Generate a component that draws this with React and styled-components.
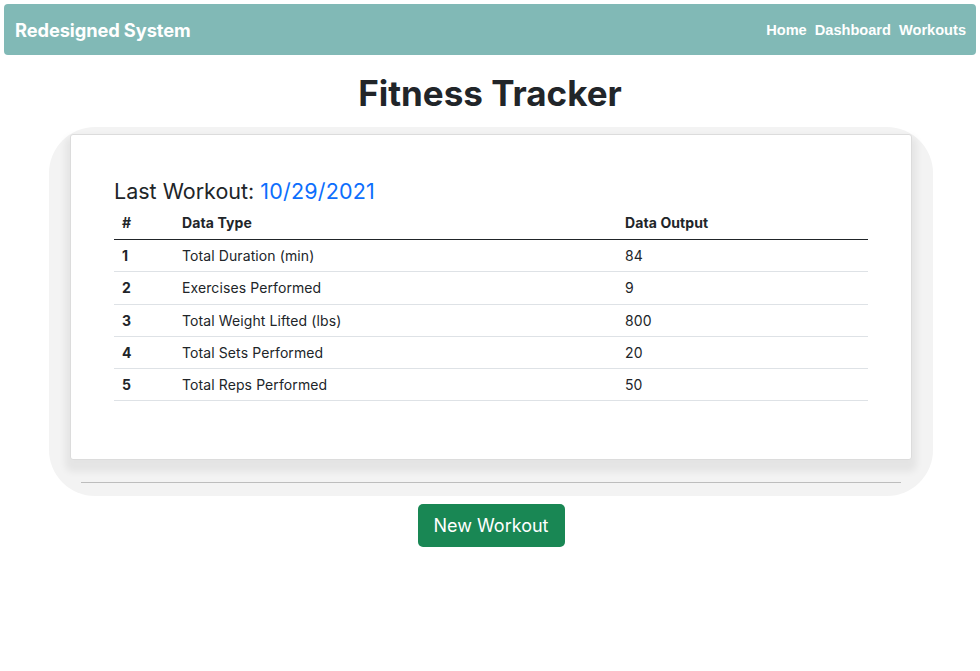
import React from "react";
import styled, { createGlobalStyle } from "styled-components";

const GlobalStyle = createGlobalStyle`
  body {
    margin: 0;
    background: #fff;
    color: #212529;
    font-family: Inter, "Noto Sans", sans-serif;
  }
`;

const Page = styled.div`
  padding: 4px;
  display: flex;
  flex-direction: column;
  align-items: center;
`;

const NavBar = styled.nav`
  align-self: stretch;
  height: 51px;
  background: #81b9b6;
  border-radius: 4px;
  display: flex;
  align-items: center;
  justify-content: space-between;
  padding: 0 10px 0 11px;
  color: #fff;
`;

const Brand = styled.div`
  font-size: 18.3px;
  font-weight: 700;
  letter-spacing: -0.1px;
`;

const NavLinks = styled.div`
  display: flex;
  gap: 8px;
  font-family: "Liberation Sans", Arial, sans-serif;
  font-size: 14.6px;
  font-weight: 700;
`;

const Title = styled.h1`
  margin: 17px 0 12px;
  font-size: 35px;
  line-height: 43px;
  font-weight: 700;
`;

const Shell = styled.div`
  width: 842px;
  margin-left: 2px;
  background: #f3f3f3;
  border-radius: 46px;
  padding: 7px 21px 13px;
`;

const Card = styled.div`
  background: #fff;
  border: 1px solid #dcdcdc;
  border-radius: 3px;
  padding: 44px 43px 58px;
  box-shadow: 0 7px 7px 5px rgba(0, 0, 0, 0.06);
`;

const Heading = styled.h2`
  margin: 0 0 4px;
  font-size: 21.5px;
  line-height: 24px;
  font-weight: 400;
`;

const DateText = styled.span`
  color: #0d6efd;
  letter-spacing: 0.2px;
`;

const Table = styled.table`
  width: 100%;
  table-layout: fixed;
  border-collapse: collapse;
  font-size: 14px;
  line-height: 21px;
  letter-spacing: 0.1px;
`;

const Th = styled.th`
  text-align: left;
  font-weight: 700;
  padding: 5px 8px 6px;
  border-bottom: 1px solid #212529;
  width: ${(p) => p.$w || "auto"};
`;

const Td = styled.td`
  padding: 5px 8px 5.25px;
  border-bottom: 1px solid #dee2e6;
  font-weight: ${(p) => (p.$bold ? 700 : 400)};
`;

const Divider = styled.hr`
  margin: 22px 11px 0;
  border: 0;
  border-top: 1px solid #bdbdbd;
`;

const Button = styled.button`
  margin-top: 8px;
  margin-left: 2px;
  background: #198754;
  color: #fff;
  border: 0;
  border-radius: 5px;
  padding: 10px 16px;
  font-family: Inter, "Noto Sans", sans-serif;
  font-size: 18px;
  line-height: 23px;
`;

const rows = [
  ["Total Duration (min)", 84],
  ["Exercises Performed", 9],
  ["Total Weight Lifted (lbs)", 800],
  ["Total Sets Performed", 20],
  ["Total Reps Performed", 50],
];

export default function App() {
  return (
    <>
      <GlobalStyle />
      <Page>
        <NavBar>
          <Brand>Redesigned System</Brand>
          <NavLinks>
            <span>Home</span>
            <span>Dashboard</span>
            <span>Workouts</span>
          </NavLinks>
        </NavBar>
        <Title>Fitness Tracker</Title>
        <Shell>
          <Card>
            <Heading>
              Last Workout: <DateText>10/29/2021</DateText>
            </Heading>
            <Table>
              <thead>
                <tr>
                  <Th $w="44px">#</Th>
                  <Th $w="427px">Data Type</Th>
                  <Th>Data Output</Th>
                </tr>
              </thead>
              <tbody>
                {rows.map(([label, value], i) => (
                  <tr key={label}>
                    <Td $bold>{i + 1}</Td>
                    <Td>{label}</Td>
                    <Td>{value}</Td>
                  </tr>
                ))}
              </tbody>
            </Table>
          </Card>
          <Divider />
        </Shell>
        <Button>New Workout</Button>
      </Page>
    </>
  );
}
